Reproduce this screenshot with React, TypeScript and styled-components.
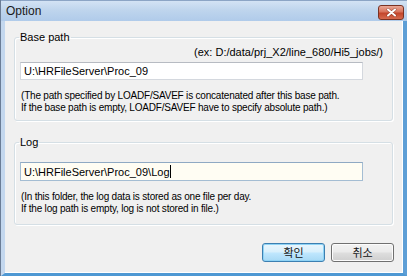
import React from 'react';
import styled, { createGlobalStyle } from 'styled-components';

const GlobalStyle = createGlobalStyle`
    html, body {
        margin: 0;
        padding: 0;
        background: #f0f0f0;
    }
    body {
        font-family: "Liberation Sans", Arial, sans-serif;
        font-size: 11px;
        color: #000;
    }
`;

// Window chrome
const Window = styled.div`
    width: 407px;
    height: 276px;
    display: flex;
    flex-direction: column;
    box-sizing: border-box;
    border-left: 1px solid #6b7d96;
    background: #f0f0f0;
    overflow: hidden;
`;

const TitleBar = styled.div`
    height: 21px;
    flex: none;
    display: flex;
    align-items: center;
    justify-content: space-between;
    padding: 0 3px 0 5px;
    background: linear-gradient(#d3e3f4 0%, #bfd5ed 45%, #b0cbea 100%);
    border-top: 1px solid #8ca5c5;
    box-sizing: border-box;
`;

const Title = styled.span`
    font-size: 12px;
    color: #1a1a1a;
`;

const CloseButton = styled.div`
    width: 26px;
    height: 15px;
    margin-top: 3px;
    border: 1px solid #7a3223;
    border-radius: 3px;
    box-sizing: border-box;
    background: linear-gradient(#eaa897 0%, #d8735c 45%, #c3452b 55%, #d66a4e 100%);
    display: flex;
    align-items: center;
    justify-content: center;
`;

const Body = styled.div`
    flex: 1;
    display: flex;
    flex-direction: column;
    border-left: 4px solid #c3d7ee;
    border-right: 4px solid #5e9fd6;
    border-bottom: 3px solid #4e98d3;
    box-shadow: inset -1px -1px 0 #ffffff;
    padding: 10px 9px 0 9px;
`;

// Group box
const Group = styled.fieldset<{ $gap?: number }>`
    margin: ${p => p.$gap ?? 0}px 1px 0 0;
    padding: 0 6px 0 5px;
    border: 1px solid #d5dfe5;
    border-radius: 3px;
    box-shadow: inset 1px 1px 0 #ffffff, 1px 1px 0 #ffffff;
    min-width: 0;
`;

const Legend = styled.legend`
    padding: 0 1px;
    margin-left: -1px;
    line-height: 13px;
    font-size: 11px;
`;

const Example = styled.div`
    text-align: right;
    line-height: 13px;
    margin-top: 2px;
    padding-right: 3px;
`;

const Field = styled.div<{ $focused?: boolean; $top: number }>`
    height: ${p => (p.$focused ? 19 : 18)}px;
    margin-top: ${p => p.$top}px;
    margin-right: 23px;
    box-sizing: border-box;
    display: flex;
    align-items: center;
    padding-left: 3px;
    background: ${p => (p.$focused ? '#fffdf3' : '#ffffff')};
    border: 1px solid ${p => (p.$focused ? '#a4bdd3' : '#d4d8de')};
    border-top-color: ${p => (p.$focused ? '#8fa9c3' : '#b7bbc2')};
`;

const Caret = styled.span`
    display: inline-block;
    width: 1px;
    height: 13px;
    background: #000;
`;

const Note = styled.div<{ $top: number; $bottom: number }>`
    margin-top: ${p => p.$top}px;
    margin-bottom: ${p => p.$bottom}px;
    font-size: 10px;
    letter-spacing: -0.2px;
    line-height: 12px;
    padding-left: 1px;
    white-space: nowrap;
`;

// Buttons
const ButtonRow = styled.div`
    display: flex;
    justify-content: flex-end;
    gap: 6px;
    margin-top: 18px;
`;

const Button = styled.button<{ $default?: boolean }>`
    width: 63px;
    height: 19px;
    padding: 0;
    font-family: "Noto Sans CJK KR", sans-serif;
    font-size: 11px;
    color: #111;
    border-radius: 3px;
    border: 1px solid ${p => (p.$default ? '#3c7fb1' : '#707070')};
    background: ${p =>
        p.$default
            ? 'linear-gradient(#eaf6fd 0%, #d9f0fc 45%, #bee6fd 55%, #a7d9f5 100%)'
            : 'linear-gradient(#f2f2f2 0%, #ebebeb 45%, #dddddd 55%, #cfcfcf 100%)'};
    box-shadow: inset 0 0 0 1px ${p => (p.$default ? '#8fd3f5' : '#fcfcfc')};
    line-height: 17px;
`;

const App: React.FC = () => {
    return (
        <>
            <GlobalStyle />
            <Window>
                <TitleBar>
                    <Title>Option</Title>
                    <CloseButton>
                        <svg width="11" height="9" viewBox="0 0 11 9">
                            <path d="M2 1.5 L9 7.5 M9 1.5 L2 7.5" stroke="#5a1a10" strokeWidth="3" strokeLinecap="round" opacity="0.45" />
                            <path d="M2 1.5 L9 7.5 M9 1.5 L2 7.5" stroke="#ffffff" strokeWidth="2" strokeLinecap="round" />
                        </svg>
                    </CloseButton>
                </TitleBar>
                <Body>
                    <Group>
                        <Legend>Base path</Legend>
                        <Example>(ex: D:/data/prj_X2/line_680/Hi5_jobs/)</Example>
                        <Field $top={3}>U:\HRFileServer\Proc_09</Field>
                        <Note $top={10} $bottom={6}>
                            (The path specified by LOADF/SAVEF is concatenated after this base path.
                            <br />
                            If the base path is empty, LOADF/SAVEF have to specify absolute path.)
                        </Note>
                    </Group>
                    <Group $gap={15}>
                        <Legend>Log</Legend>
                        <Field $top={13} $focused>
                            U:\HRFileServer\Proc_09\Log
                            <Caret />
                        </Field>
                        <Note $top={10} $bottom={9}>
                            (In this folder, the log data is stored as one file per day.
                            <br />
                            If the log path is empty, log is not stored in file.)
                        </Note>
                    </Group>
                    <ButtonRow>
                        <Button $default>확인</Button>
                        <Button>취소</Button>
                    </ButtonRow>
                </Body>
            </Window>
        </>
    );
};

export default App;
